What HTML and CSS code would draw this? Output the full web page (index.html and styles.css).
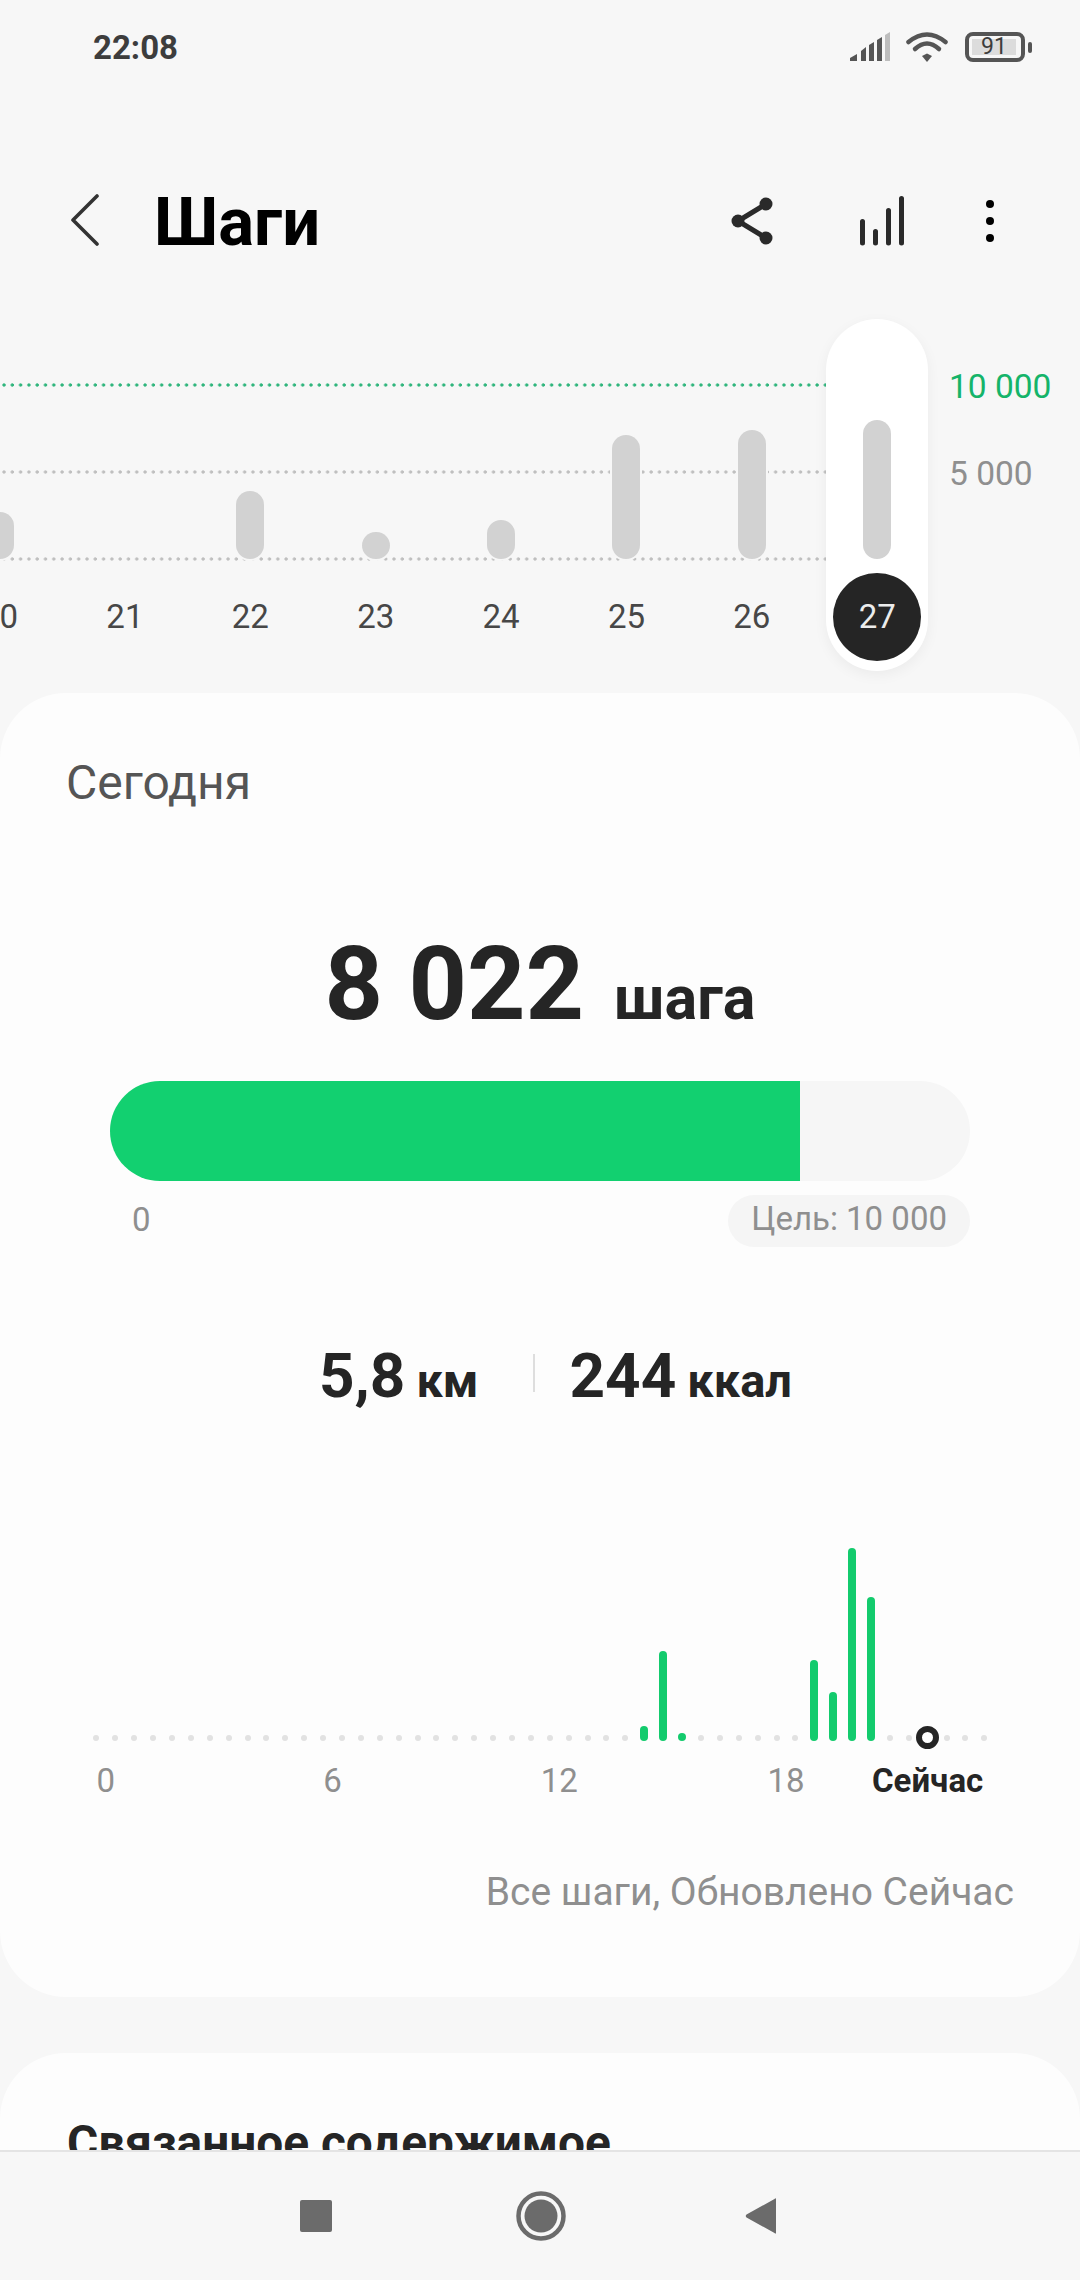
FILE: index.html
```html
<!DOCTYPE html>
<html lang="ru">
<head>
<meta charset="utf-8">
<title>Шаги</title>
<link rel="stylesheet" href="styles.css">
</head>
<body>
<div class="screen">
  <div class="scroll">
    <div class="status">
      <span class="time">22:08</span>
      <div class="status-icons">
        <svg class="signal" width="40" height="30" viewBox="0 0 40 30">
          <polygon points="0,29 0,26 7,22 7,29" fill="#555"/>
          <polygon points="11,29 11,19 16,15 16,29" fill="#555"/>
          <polygon points="19,29 19,13 24,10 24,29" fill="#555"/>
          <polygon points="27,29 27,8 32,5 32,29" fill="#555"/>
          <polygon points="35,29 35,3 40,0 40,29" fill="#bdbdbd"/>
        </svg>
        <svg class="wifi" width="42" height="30" viewBox="0 0 42 30">
          <path d="M2.5 10 Q21 -5 39.500 10" fill="none" stroke="#555" stroke-width="4.500" stroke-linecap="round"/>
          <path d="M9 17 Q21 6 33 17" fill="none" stroke="#555" stroke-width="4.500" stroke-linecap="round"/>
          <polygon points="16,24 21,21.500 26,24 21,30" fill="#555"/>
        </svg>
        <div class="battery"><div class="battery-fill">91</div></div>
        <span class="battery-nub"></span>
      </div>
    </div>

    <header class="header">
      <svg class="back" width="30" height="52" viewBox="0 0 30 52">
        <path d="M27 2 L3 26 L27 50" fill="none" stroke="#333" stroke-width="3.600" stroke-linecap="round" stroke-linejoin="round"/>
      </svg>
      <h1 class="title">Шаги</h1>
      <div class="actions">
        <svg class="icon-share" width="44" height="48" viewBox="0 0 44 48">
          <path d="M36 7 L8 24 L36 41" fill="none" stroke="#2a2a2a" stroke-width="5"/>
          <circle cx="36" cy="7" r="6.500" fill="#2a2a2a"/>
          <circle cx="8" cy="24" r="6.500" fill="#2a2a2a"/>
          <circle cx="36" cy="41" r="6.500" fill="#2a2a2a"/>
        </svg>
        <svg class="icon-bars" width="46" height="50" viewBox="0 0 46 50">
          <path d="M3.500 25.500V47 M16.500 35.500V47 M29.500 14.500V47 M42.500 2.500V47" fill="none" stroke="#2a2a2a" stroke-width="5" stroke-linecap="round"/>
        </svg>
        <svg class="icon-more" width="10" height="44" viewBox="0 0 10 44">
          <circle cx="5" cy="5" r="4" fill="#000"/>
          <circle cx="5" cy="22" r="4" fill="#000"/>
          <circle cx="5" cy="39" r="4" fill="#000"/>
        </svg>
      </div>
    </header>

    <section class="week-chart">
      <div class="plot">
        <div class="grid-line line-goal"></div>
        <div class="grid-line line-mid"></div>
        <div class="grid-line line-base"></div>
        <div class="week">
          <div class="day"><div class="well"><div class="day-bar" style="height:47px"></div></div><span class="day-label">20</span></div>
          <div class="day"><div class="well"></div><span class="day-label">21</span></div>
          <div class="day"><div class="well"><div class="day-bar" style="height:68px"></div></div><span class="day-label">22</span></div>
          <div class="day"><div class="well"><div class="day-bar" style="height:27px"></div></div><span class="day-label">23</span></div>
          <div class="day"><div class="well"><div class="day-bar" style="height:39px"></div></div><span class="day-label">24</span></div>
          <div class="day"><div class="well"><div class="day-bar" style="height:124px"></div></div><span class="day-label">25</span></div>
          <div class="day"><div class="well"><div class="day-bar" style="height:129px"></div></div><span class="day-label">26</span></div>
          <div class="day day-selected"><div class="well"><div class="day-bar" style="height:139px"></div></div><span class="day-label">27</span></div>
        </div>
      </div>
      <div class="axis">
        <span class="axis-goal">10 000</span>
        <span class="axis-mid">5 000</span>
      </div>
    </section>

    <main class="card card-today">
      <h2 class="today">Сегодня</h2>
      <div class="total"><span class="total-num">8 022</span><span class="total-unit">шага</span></div>
      <div class="progress"><div class="progress-fill" style="width:690px"></div></div>
      <div class="progress-meta">
        <span class="meta-zero">0</span>
        <span class="meta-goal">Цель: 10 000</span>
      </div>
      <div class="stats">
        <div class="stat"><span class="stat-num">5,8</span><span class="stat-unit">км</span></div>
        <span class="stat-sep"></span>
        <div class="stat"><span class="stat-num">244</span><span class="stat-unit">ккал</span></div>
      </div>
      <div class="hours" id="hours"></div>
      <div class="hour-labels">
        <span class="hl hl-0">0</span>
        <span class="hl hl-6">6</span>
        <span class="hl hl-12">12</span>
        <span class="hl hl-18">18</span>
        <span class="hl hl-now">Сейчас</span>
      </div>
      <p class="foot">Все шаги, Обновлено Сейчас</p>
    </main>

    <section class="card card-related">
      <h2 class="related">Связанное содержимое</h2>
    </section>
  </div>

  <nav class="navbar">
    <span class="nav-square"></span>
    <svg class="nav-home" width="50" height="50" viewBox="0 0 50 50">
      <circle cx="25" cy="25" r="22.500" fill="none" stroke="#6b6b6b" stroke-width="4.500"/>
      <circle cx="25" cy="25" r="16.500" fill="#6b6b6b"/>
    </svg>
    <svg class="nav-back" width="32" height="38" viewBox="0 0 32 38">
      <path d="M31 2.500 V35.500 Q31 37.500 29.500 36 L1.500 20.500 Q0 19 1.500 17.500 L29.500 2 Q31 0.500 31 2.500 Z" fill="#6b6b6b"/>
    </svg>
  </nav>
</div>
<script src="hours.js"></script>
</body>
</html>
```

FILE: hours.js
```js
var bars = { 29: 15, 30: 90, 31: 8, 38: 81, 39: 49, 40: 193, 41: 144 };
var host = document.getElementById('hours');
for (var i = 0; i < 48; i++) {
  var el = document.createElement('span');
  if (i === 44) {
    el.className = 'now-ring';
  } else if (bars[i]) {
    el.className = 'hour-bar';
    el.style.height = bars[i] + 'px';
  } else {
    el.className = 'hour-dot';
  }
  host.appendChild(el);
}
```

FILE: styles.css
```css
* { box-sizing: border-box; }
html, body { margin: 0; padding: 0; }
body {
  width: 1080px;
  height: 2280px;
  overflow: hidden;
  background: #f7f7f7;
  font-family: Roboto, "Noto Sans", sans-serif;
  color: #252525;
}
h1, h2, p { margin: 0; font-weight: normal; }

.screen { display: flex; flex-direction: column; height: 2280px; }
.scroll { flex: 0 0 2150px; height: 2150px; overflow: hidden; }

/* status bar */
.status {
  height: 90px;
  padding: 0 48px 0 93px;
  display: flex;
  align-items: flex-start;
  justify-content: space-between;
}
.time {
  margin-top: 28px;
  font-size: 33px;
  line-height: 40px;
  font-weight: 700;
  color: #3d3d3d;
}
.status-icons { display: flex; align-items: flex-start; padding-top: 32px; }
.signal { margin-right: 16px; }
.wifi { margin-right: 17px; }
.battery {
  width: 60px;
  height: 30px;
  border: 4px solid #555;
  border-radius: 8px;
  padding: 3px;
}
.battery-fill {
  width: 44px;
  height: 16px;
  background: #dcdcdc;
  font-size: 23px;
  line-height: 16px;
  text-align: center;
  color: #3d3d3d;
}
.battery-nub {
  width: 4px;
  height: 11px;
  margin: 10px 0 0 3px;
  border-radius: 2px;
  background: #555;
}

/* header */
.header {
  margin-top: 80px;
  height: 100px;
  padding-left: 70px;
  display: flex;
  align-items: center;
}
.back { margin-right: 54px; }
.title {
  margin-top: 4px;
  font-size: 67px;
  line-height: 100px;
  font-weight: 700;
  color: #000;
}
.actions { margin-top: 1px; margin-left: auto; margin-right: 85px; display: flex; align-items: center; }
.icon-share { margin-right: 85px; }
.icon-bars { margin-right: 80px; }

/* week chart */
.week-chart {
  margin-top: 49px;
  height: 352px;
  display: flex;
}
.plot { position: relative; width: 949px; height: 352px; }
.grid-line {
  position: absolute;
  left: 0;
  width: 826px;
  height: 4px;
  background-size: 8.300px 4px;
  background-position: 2px 0;
  background-repeat: repeat-x;
}
.line-goal { top: 64px; background-image: radial-gradient(circle at 2px 2px, #2fb57c 1.300px, transparent 2px); }
.line-mid { top: 151px; background-image: radial-gradient(circle at 2px 2px, #bfbfbf 1.300px, transparent 2px); }
.line-base { top: 238px; background-image: radial-gradient(circle at 2px 2px, #bfbfbf 1.300px, transparent 2px); }
.week {
  position: relative;
  display: flex;
  margin-left: -63.200px;
  width: 1003.200px;
}
.day {
  position: relative;
  flex: 0 0 125.400px;
  display: flex;
  flex-direction: column;
  align-items: center;
}
.well {
  position: relative;
  height: 240px;
  display: flex;
  align-items: flex-end;
}
.day-bar {
  width: 28px;
  background: #d2d2d2;
  border-radius: 14px;
  box-shadow: 0 0 0 2px #f7f7f7;
}
.day-label {
  position: relative;
  margin-top: 34px;
  font-size: 33px;
  line-height: 48px;
  color: #474747;
}
.day-selected::before {
  content: "";
  position: absolute;
  top: 0;
  left: 11.500px;
  width: 102px;
  height: 352px;
  border-radius: 51px;
  background: #fff;
  box-shadow: 0 4px 14px rgba(0, 0, 0, 0.05);
}
.day-selected .day-bar { box-shadow: none; }
.day-selected .day-label {
  width: 88px;
  height: 88px;
  margin-top: 14px;
  border-radius: 50%;
  background: #252525;
  color: #ececec;
  text-align: center;
  line-height: 88px;
}
.axis {
  display: flex;
  flex-direction: column;
  align-items: flex-start;
  padding-top: 48px;
  font-size: 33.500px;
  line-height: 40px;
}
.axis-goal { color: #15b46a; }
.axis-mid { margin-top: 47px; color: #8f8f8f; }

/* cards */
.card {
  background: #fdfdfd;
  border-radius: 66px;
}
.card-today {
  margin-top: 22px;
  height: 1304px;
  padding: 60px 0 0;
}
.today {
  padding-left: 66px;
  font-size: 48px;
  line-height: 60px;
  color: #555;
}
.total {
  margin-top: 111px;
  display: flex;
  justify-content: center;
  align-items: baseline;
  height: 120px;
  line-height: 120px;
}
.total-num { font-size: 102px; font-weight: 700; color: #252525; }
.total-unit { margin-left: 30px; font-size: 61px; font-weight: 700; color: #252525; }
.progress {
  margin: 37px 110px 0;
  height: 100px;
  border-radius: 50px;
  background: #f6f6f6;
  overflow: hidden;
}
.progress-fill { height: 100px; background: #12d070; }
.progress-meta {
  margin: 14px 110px 0 0;
  padding-left: 132px;
  height: 52px;
  display: flex;
  justify-content: space-between;
  align-items: center;
  font-size: 33px;
  color: #8f8f8f;
}
.meta-zero { margin-top: -4px; }
.meta-goal {
  height: 52px;
  padding: 0 23px;
  line-height: 48px;
  border-radius: 26px;
  background: #f5f5f5;
}
.stats {
  margin-top: 93px;
  height: 72px;
  padding-left: 319px;
  display: flex;
  align-items: baseline;
  line-height: 72px;
  font-weight: 700;
  color: #252525;
}
.stat { display: flex; align-items: baseline; }
.stat-num { font-size: 62px; }
.stat-unit { margin-left: 11px; font-size: 47px; }
.stat-sep {
  align-self: flex-start;
  width: 2px;
  height: 38px;
  margin: 14px 35px 0 54px;
  background: #dedede;
}

/* hourly chart */
.hours {
  margin: 128px 0 0 87px;
  height: 201px;
  display: grid;
  grid-template-columns: repeat(48, 18.900px);
  justify-items: center;
  align-items: end;
}
.hour-dot { width: 6px; height: 6px; border-radius: 50%; background: #e2e2e2; }
.hour-bar { width: 8px; border-radius: 4px; background: #13cb6d; }
.now-ring {
  width: 23px;
  height: 23px;
  margin-bottom: -8px;
  border: 6px solid #252525;
  border-radius: 50%;
  background: #fff;
}
.hour-labels {
  margin: 20px 0 0 87px;
  height: 40px;
  display: grid;
  grid-template-columns: repeat(48, 18.900px);
  justify-items: center;
  font-size: 33px;
  line-height: 40px;
  color: #8f8f8f;
}
.hl-0 { grid-column: 1 / span 2; }
.hl-6 { grid-column: 13 / span 2; }
.hl-12 { grid-column: 25 / span 2; }
.hl-18 { grid-column: 37 / span 2; }
.hl-now { grid-column: 42 / span 7; font-weight: 700; color: #252525; }
.foot {
  margin-top: 66px;
  padding-right: 66px;
  text-align: right;
  font-size: 39px;
  line-height: 50px;
  color: #8f8f8f;
}
.card-related {
  margin-top: 56px;
  padding: 65px 67px 0;
  height: 300px;
}
.related {
  font-size: 47.800px;
  line-height: 50px;
  font-weight: 700;
  color: #252525;
}

/* nav bar */
.navbar {
  position: relative;
  flex: 0 0 130px;
  border-top: 2px solid #e4e4e4;
  background: #f7f7f7;
  display: flex;
  align-items: center;
  padding-left: 300px;
}
.nav-square {
  width: 32px;
  height: 32px;
  border-radius: 2px;
  background: #6b6b6b;
}
.nav-home { margin-left: 184px; }
.nav-back { margin-left: 179px; }
```
